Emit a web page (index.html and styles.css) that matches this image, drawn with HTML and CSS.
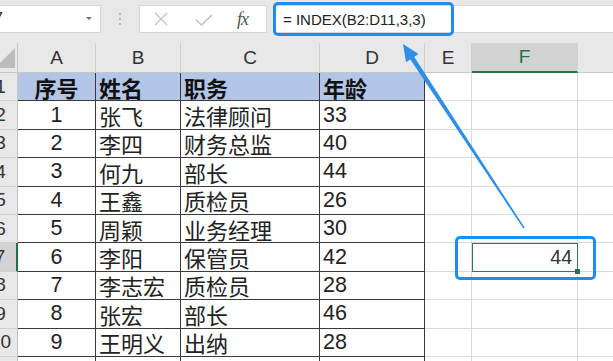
FILE: index.html
```html
<!DOCTYPE html>
<html lang="zh-CN">
<head>
<meta charset="utf-8">
<title>INDEX</title>
<link rel="stylesheet" href="styles.css">
</head>
<body>
<div class="page">
  <div class="toolbar">
    <div class="namebox"><span class="name">F7</span><span class="caret"></span></div>
    <div class="dots"><i></i><i></i><i></i></div>
    <div class="fxbox">
      <svg class="ic-x" width="14" height="14" viewBox="0 0 14 14"><path d="M1 1L13 13M13 1L1 13" stroke="#c4c4c4" stroke-width="1.4" fill="none"/></svg>
      <svg class="ic-ok" width="18" height="12" viewBox="0 0 18 12"><path d="M1 5.5L6.5 11L17 1" stroke="#c4c4c4" stroke-width="1.5" fill="none"/></svg>
      <span class="fx">fx</span>
    </div>
    <div class="formula">= INDEX(B2:D11,3,3)</div>
  </div>

  <div class="sheet">
    <div class="ch corner"><svg width="20" height="20" viewBox="0 0 20 20"><path d="M0 20H20V0Z" fill="#bcbcbc"/></svg></div>
    <div class="ch">A</div><div class="ch">B</div><div class="ch">C</div><div class="ch">D</div><div class="ch">E</div><div class="ch sel">F</div><div class="ch"></div>

    <div class="rh">1</div>
    <div class="c t h ctr">序号</div><div class="c t h">姓名</div><div class="c t h">职务</div><div class="c t h">年龄</div><div class="c"></div><div class="c"></div><div class="c"></div>

    <div class="rh">2</div>
    <div class="c t ctr n">1</div><div class="c t">张飞</div><div class="c t">法律顾问</div><div class="c t n">33</div><div class="c"></div><div class="c"></div><div class="c"></div>

    <div class="rh">3</div>
    <div class="c t ctr n">2</div><div class="c t">李四</div><div class="c t">财务总监</div><div class="c t n">40</div><div class="c"></div><div class="c"></div><div class="c"></div>

    <div class="rh">4</div>
    <div class="c t ctr n">3</div><div class="c t">何九</div><div class="c t">部长</div><div class="c t n">44</div><div class="c"></div><div class="c"></div><div class="c"></div>

    <div class="rh">5</div>
    <div class="c t ctr n">4</div><div class="c t">王鑫</div><div class="c t">质检员</div><div class="c t n">26</div><div class="c"></div><div class="c"></div><div class="c"></div>

    <div class="rh">6</div>
    <div class="c t ctr n">5</div><div class="c t">周颖</div><div class="c t">业务经理</div><div class="c t n">30</div><div class="c"></div><div class="c"></div><div class="c"></div>

    <div class="rh sel">7</div>
    <div class="c t ctr n">6</div><div class="c t">李阳</div><div class="c t">保管员</div><div class="c t n">42</div><div class="c"></div><div class="c active rgt">44</div><div class="c"></div>

    <div class="rh">8</div>
    <div class="c t ctr n">7</div><div class="c t">李志宏</div><div class="c t">质检员</div><div class="c t n">28</div><div class="c"></div><div class="c"></div><div class="c"></div>

    <div class="rh">9</div>
    <div class="c t ctr n">8</div><div class="c t">张宏</div><div class="c t">部长</div><div class="c t n">46</div><div class="c"></div><div class="c"></div><div class="c"></div>

    <div class="rh">10</div>
    <div class="c t ctr n">9</div><div class="c t">王明义</div><div class="c t">出纳</div><div class="c t n">28</div><div class="c"></div><div class="c"></div><div class="c"></div>

    <div class="rh">11</div>
    <div class="c t"></div><div class="c t"></div><div class="c t"></div><div class="c t"></div><div class="c"></div><div class="c"></div><div class="c"></div>
  </div>

  <div class="mark mark-formula"></div>
  <div class="mark mark-cell"></div>
  <svg class="arrow" width="613" height="361" viewBox="0 0 613 361">
    <polygon points="412.7,54.4 524.6,227.6 523.4,228.4 408.7,57.0" fill="#2f8fe6"/>
    <polygon points="403,44 418.6,54.1 406.0,62.3" fill="#2f8fe6"/>
  </svg>
</div>
</body>
</html>
```
FILE: styles.css
```css
html, body {
  margin: 0;
  padding: 0;
  background: #fff;
}
.page {
  position: relative;
  width: 613px;
  height: 361px;
  overflow: hidden;
  font-family: "Liberation Sans", "Noto Sans CJK SC", sans-serif;
  color: #222;
}

/* toolbar */
.toolbar {
  height: 43px;
  box-sizing: border-box;
  padding-top: 5px;
  background: #e8e8e8;
  display: flex;
  align-items: flex-start;
}
.namebox {
  width: 101px;
  height: 28px;
  box-sizing: border-box;
  background: #fff;
  border: 1px solid #d6d6d6;
  border-left: none;
  display: flex;
  align-items: center;
  justify-content: space-between;
  padding-right: 8px;
  overflow: hidden;
}
.name {
  font-size: 18px;
  color: #333;
  margin-left: -18px;
}
.caret {
  width: 0;
  height: 0;
  border-left: 3px solid transparent;
  border-right: 3px solid transparent;
  border-top: 3px solid #707070;
  margin-top: -2px;
}
.dots {
  margin-left: 17px;
  width: 4px;
  height: 28px;
  display: flex;
  flex-direction: column;
  align-items: center;
  justify-content: center;
  gap: 3px;
}
.dots i {
  display: block;
  width: 2px;
  height: 2px;
  border-radius: 50%;
  background: #a8a8a8;
}
.fxbox {
  margin-left: 17px;
  width: 128px;
  height: 28px;
  box-sizing: border-box;
  background: #fff;
  border: 1px solid #d6d6d6;
  display: flex;
  align-items: center;
}
.ic-x { margin-left: 14px; }
.ic-ok { margin-left: 27px; margin-top: 2px; }
.fx {
  margin-left: 24px;
  font-family: "Liberation Serif", serif;
  font-style: italic;
  font-size: 18px;
  color: #555;
  letter-spacing: -1px;
}
.formula {
  margin-left: 6px;
  flex: 1;
  height: 28px;
  box-sizing: border-box;
  background: #fff;
  border: 1px solid #d6d6d6;
  border-right: none;
  padding-left: 9px;
  display: flex;
  align-items: center;
  font-size: 15px;
  color: #222;
}

/* sheet */
.sheet {
  margin-left: -16px;
  display: grid;
  grid-template-columns: 34px 78px 85px 139px 105px 47px 106px 60px;
  grid-template-rows: 30px repeat(10, 28.4px) 30px;
}
.ch {
  background: #e8e8e8;
  border-right: 1px solid #d0d0d0;
  border-bottom: 1px solid #c6c6c6;
  box-sizing: border-box;
  display: flex;
  align-items: center;
  justify-content: center;
  font-size: 19px;
  color: #333;
}
.ch.corner {
  justify-content: flex-end;
  align-items: flex-end;
  padding: 0 2px 4px 0;
  border-right-color: #c6c6c6;
}
.ch.sel {
  background: #d3d3d3;
  border-bottom: 2px solid #217346;
  color: #217346;
}
.rh {
  background: #e8e8e8;
  border-right: 1px solid #c6c6c6;
  border-bottom: 1px solid #d0d0d0;
  box-sizing: border-box;
  display: flex;
  align-items: center;
  justify-content: center;
  font-size: 19px;
  color: #333;
}
.rh.sel {
  background: #d3d3d3;
  border-right: 2px solid #217346;
}
.c {
  box-sizing: border-box;
  border-right: 1px solid #dadada;
  border-bottom: 1px solid #dadada;
  display: flex;
  align-items: center;
  padding-left: 3px;
  font-size: 22px;
  color: #222;
  white-space: nowrap;
}
.c.t {
  border-right-color: #3a3a3a;
  border-bottom-color: #3a3a3a;
}
.c.h {
  background: #b4c6e7;
  font-weight: bold;
  color: #111;
}
.c.n { font-size: 21.5px; }
.ctr { justify-content: center; padding-left: 0; }
.rgt { justify-content: flex-end; padding-right: 5px; font-size: 19.5px; }
.c.active {
  position: relative;
  outline: 1.5px solid #2f7a4f;
  outline-offset: -1px;
  color: #333;
}
.c.active::after {
  content: "";
  position: absolute;
  right: -3px;
  bottom: -3px;
  width: 5px;
  height: 5px;
  background: #217346;
}

/* annotations */
.mark {
  position: absolute;
  box-sizing: border-box;
  border: 3px solid #1e8cf0;
  border-radius: 5px;
}
.mark-formula {
  left: 273px;
  top: 2px;
  width: 181px;
  height: 34px;
}
.mark-cell {
  left: 455px;
  top: 236px;
  width: 141px;
  height: 44px;
}
.arrow {
  position: absolute;
  left: 0;
  top: 0;
  pointer-events: none;
}
```
